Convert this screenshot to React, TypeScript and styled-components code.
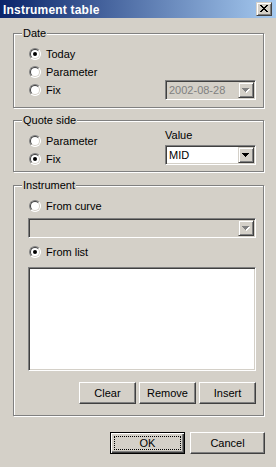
import React from 'react';
import styled, { createGlobalStyle, css } from 'styled-components';

const GlobalStyle = createGlobalStyle`
  *, *::before, *::after { box-sizing: border-box; }
  html, body { margin: 0; padding: 0; background: #d4d0c8; }
  body {
    font-family: "Liberation Sans", Arial, sans-serif;
    font-size: 11px;
    color: #000;
  }
`;

const sunken = css`
  border: 1px solid;
  border-color: #808080 #ffffff #ffffff #808080;
  box-shadow: inset 1px 1px 0 #404040, inset -1px -1px 0 #d4d0c8;
`;

const raised = css`
  border: 1px solid;
  border-color: #d4d0c8 #404040 #404040 #d4d0c8;
  box-shadow: inset 1px 1px 0 #ffffff, inset -1px -1px 0 #808080;
`;

const Window = styled.div`
  width: 276px;
  height: 467px;
  background: #d4d0c8;
  display: flex;
  flex-direction: column;
`;

const TitleBar = styled.div`
  height: 18px;
  display: flex;
  align-items: center;
  padding: 0 4px 0 3px;
  background: linear-gradient(to right, #0a246a, #a6caf0);
`;

const TitleText = styled.span`
  flex: 1;
  color: #fff;
  font-weight: bold;
  font-size: 12px;
  letter-spacing: 0.2px;
  padding-top: 1px;
`;

const CaptionButton = styled.div`
  width: 16px;
  height: 14px;
  background: #d4d0c8;
  ${raised};
  display: flex;
  align-items: center;
  justify-content: center;
  padding: 0 1px 1px 0;
`;

const Body = styled.div`
  padding: 15px 12px 0 13px;
  display: flex;
  flex-direction: column;
`;

const Group = styled.div<{ $mt?: number; $pt: number; $pb: number; $h: number }>`
  position: relative;
  height: ${p => p.$h}px;
  margin-top: ${p => p.$mt ?? 0}px;
  padding: ${p => p.$pt}px 7px ${p => p.$pb}px 14px;
  border: 1px solid #808080;
  box-shadow: inset 1px 1px 0 #fff, 1px 1px 0 #fff;
`;

const Legend = styled.span`
  position: absolute;
  top: -7px;
  left: 8px;
  padding: 0 1px;
  line-height: 13px;
  background: #d4d0c8;
`;

const Column = styled.div<{ $mt?: number }>`
  display: flex;
  flex-direction: column;
  margin-top: ${p => p.$mt ?? 0}px;
`;

const RadioRow = styled.div<{ $mt?: number }>`
  height: 18px;
  display: flex;
  align-items: center;
  gap: 5px;
  padding-left: 1px;
  margin-top: ${p => p.$mt ?? 0}px;
`;

const RadioMark = styled.span<{ $checked?: boolean }>`
  position: relative;
  flex: none;
  width: 12px;
  height: 12px;
  border-radius: 50%;
  border: 1px solid;
  border-color: #808080 #ffffff #ffffff #808080;
  background: #fff;

  &::before {
    content: '';
    position: absolute;
    inset: 0;
    border-radius: 50%;
    border: 1px solid;
    border-color: #404040 #d4d0c8 #d4d0c8 #404040;
  }

  &::after {
    content: '';
    position: absolute;
    left: 3px;
    top: 3px;
    width: 4px;
    height: 4px;
    border-radius: 50%;
    background: #000;
    display: ${p => (p.$checked ? 'block' : 'none')};
  }
`;

const Combo = styled.div<{ $disabled?: boolean; $w?: number; $mt?: number }>`
  flex: none;
  width: ${p => (p.$w ? `${p.$w}px` : '100%')};
  height: 20px;
  margin-left: auto;
  margin-top: ${p => p.$mt ?? 0}px;
  padding: 1px;
  display: flex;
  ${sunken};
  background: ${p => (p.$disabled ? '#d4d0c8' : '#fff')};
  color: ${p => (p.$disabled ? '#808080' : '#000')};
`;

const ComboText = styled.span`
  flex: 1;
  line-height: 16px;
  padding-left: 2px;
`;

const DropButton = styled.span`
  width: 16px;
  height: 16px;
  background: #d4d0c8;
  ${raised};
  display: flex;
  align-items: center;
  justify-content: center;
`;

const Label = styled.span`
  line-height: 13px;
  margin-bottom: 3px;
`;

const QuoteRow = styled.div`
  display: flex;
`;

const ListBox = styled.div`
  height: 104px;
  margin-top: 6px;
  background: #fff;
  ${sunken};
`;

const ButtonRow = styled.div<{ $mt: number; $gap: number }>`
  display: flex;
  justify-content: flex-end;
  gap: ${p => p.$gap}px;
  margin-top: ${p => p.$mt}px;
`;

const PushButton = styled.button<{ $w: number; $default?: boolean }>`
  position: relative;
  width: ${p => p.$w}px;
  height: 22px;
  padding: 0 0 1px;
  font: inherit;
  color: #000;
  background: #d4d0c8;
  border: 1px solid;
  border-color: #fff #404040 #404040 #fff;
  box-shadow: inset -1px -1px 0 #808080;

  ${p =>
    p.$default &&
    css`
      border-color: #000;
      box-shadow: inset 1px 1px 0 #fff, inset -1px -1px 0 #404040,
        inset -2px -2px 0 #808080;

      &::after {
        content: '';
        position: absolute;
        inset: 3px;
        border: 1px dotted #000;
      }
    `}
`;

const Footer = styled.div`
  display: flex;
  justify-content: flex-end;
  gap: 5px;
  margin: 16px -1px 0 0;
`;

const Arrow = ({ disabled }: { disabled?: boolean }) => (
  <svg width="8" height="5" viewBox="0 0 8 5" shapeRendering="crispEdges">
    {disabled && (
      <path d="M1 1h7v1h-7z M2 2h5v1h-5z M3 3h3v1h-3z M4 4h1v1h-1z" fill="#fff" />
    )}
    <path
      d="M0 0h7v1h-7z M1 1h5v1h-5z M2 2h3v1h-3z M3 3h1v1h-1z"
      fill={disabled ? '#808080' : '#000'}
    />
  </svg>
);

const CloseGlyph = () => (
  <svg width="8" height="7" viewBox="0 0 8 7" shapeRendering="crispEdges">
    <path
      d="M0 0h2v1h-2z M6 0h2v1h-2z M1 1h2v1h-2z M5 1h2v1h-2z M2 2h4v1h-4z M3 3h2v1h-2z M2 4h4v1h-4z M1 5h2v1h-2z M5 5h2v1h-2z M0 6h2v1h-2z M6 6h2v1h-2z"
      fill="#000"
    />
  </svg>
);

const Radio = ({ label, checked, mt }: { label: string; checked?: boolean; mt?: number }) => (
  <RadioRow $mt={mt}>
    <RadioMark $checked={checked} />
    <span>{label}</span>
  </RadioRow>
);

export default function App() {
  return (
    <Window>
      <GlobalStyle />
      <TitleBar>
        <TitleText>Instrument table</TitleText>
        <CaptionButton>
          <CloseGlyph />
        </CaptionButton>
      </TitleBar>

      <Body>
        <Group $pt={11} $pb={8} $h={75}>
          <Legend>Date</Legend>
          <Radio label="Today" checked />
          <Radio label="Parameter" />
          <RadioRow>
            <RadioMark />
            <span>Fix</span>
            <Combo $disabled $w={91}>
              <ComboText>2002-08-28</ComboText>
              <DropButton>
                <Arrow disabled />
              </DropButton>
            </Combo>
          </RadioRow>
        </Group>

        <Group $mt={12} $pt={8} $pb={3} $h={52}>
          <Legend>Quote side</Legend>
          <QuoteRow>
            <Column $mt={3}>
              <Radio label="Parameter" />
              <Radio label="Fix" checked />
            </Column>
            <Column style={{ marginLeft: 'auto', width: 91 }}>
              <Label>Value</Label>
              <Combo $w={91}>
                <ComboText>MID</ComboText>
                <DropButton>
                  <Arrow />
                </DropButton>
              </Combo>
            </Column>
          </QuoteRow>
        </Group>

        <Group $mt={13} $pt={11} $pb={11} $h={231}>
          <Legend>Instrument</Legend>
          <Radio label="From curve" />
          <Combo $disabled $mt={3}>
            <ComboText />
            <DropButton>
              <Arrow disabled />
            </DropButton>
          </Combo>
          <Radio label="From list" checked mt={5} />
          <ListBox />
          <ButtonRow $mt={11} $gap={3}>
            <PushButton $w={57}>Clear</PushButton>
            <PushButton $w={57}>Remove</PushButton>
            <PushButton $w={57}>Insert</PushButton>
          </ButtonRow>
        </Group>

        <Footer>
          <PushButton $w={75} $default>
            OK
          </PushButton>
          <PushButton $w={75}>Cancel</PushButton>
        </Footer>
      </Body>
    </Window>
  );
}
